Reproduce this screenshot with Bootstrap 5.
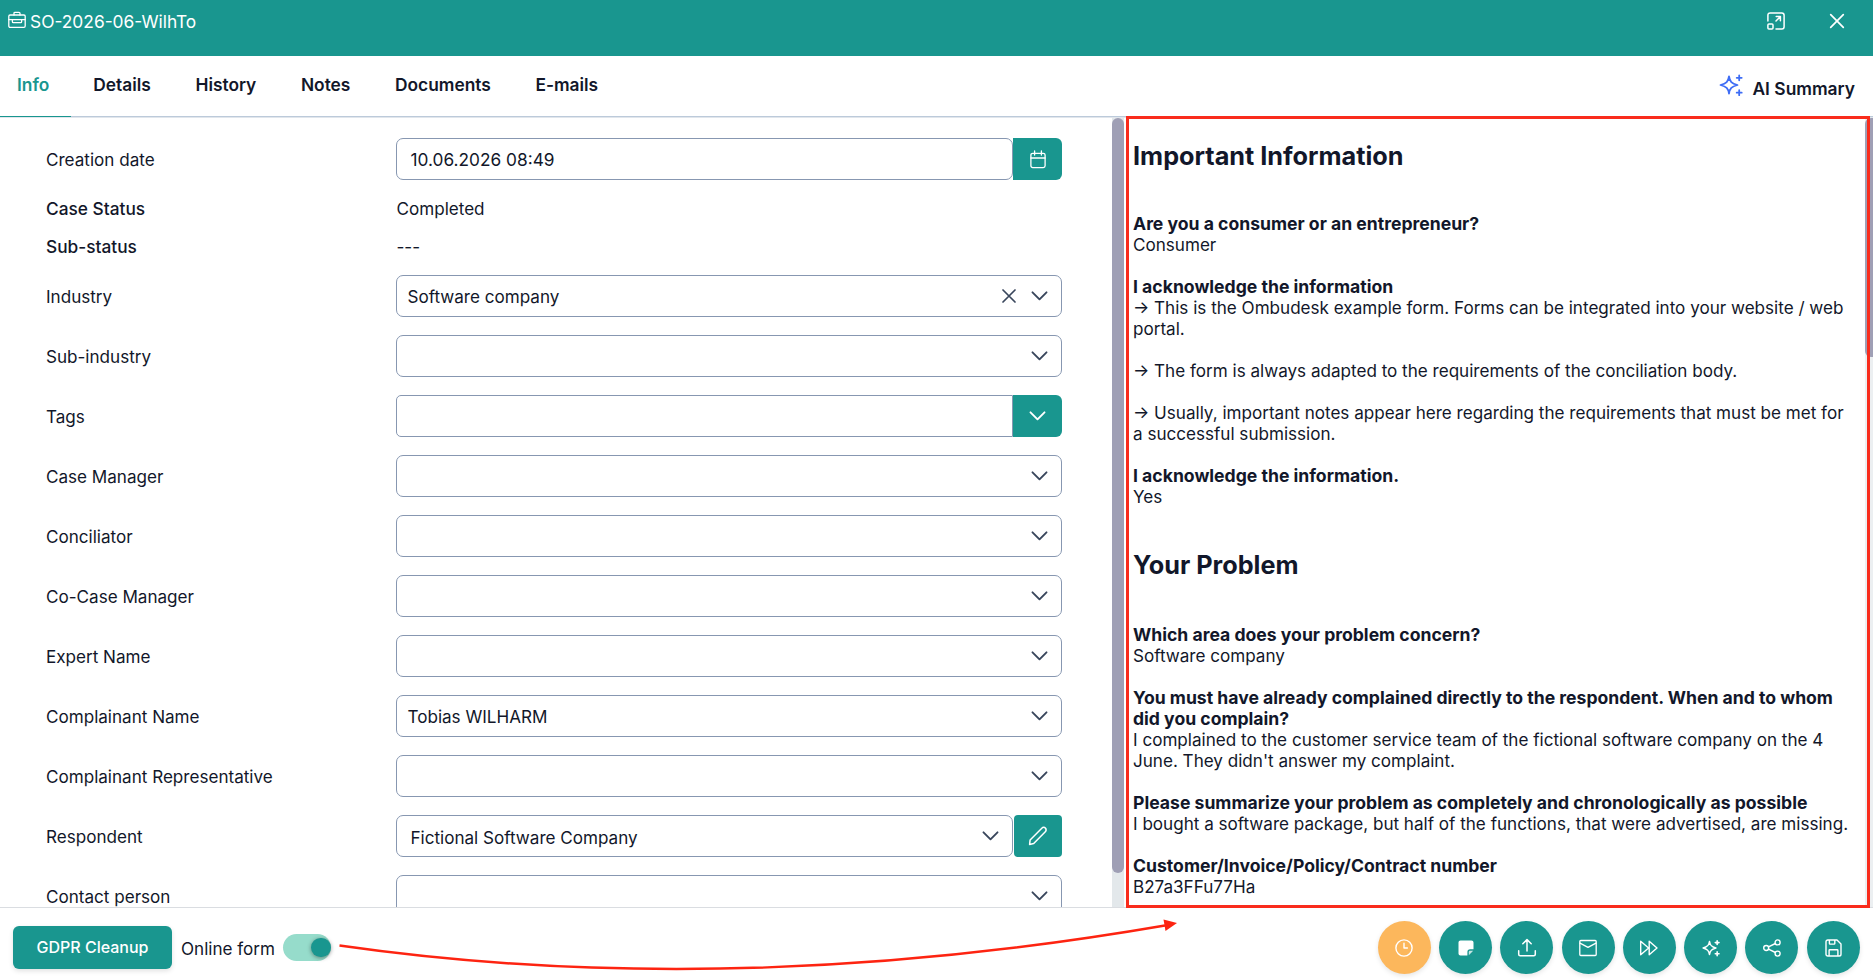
<!DOCTYPE html>
<html lang="en">
<head>
<meta charset="utf-8">
<title>SO-2026-06-WilhTo</title>
<link href="https://cdn.jsdelivr.net/npm/bootstrap@5.3.0/dist/css/bootstrap.min.css" rel="stylesheet">
<style>
:root{--teal:#19968f;--ink:#12172a;--line:#8797b1}
body{font-family:Inter,"Liberation Sans",sans-serif;font-size:17.08px;line-height:21px;color:var(--ink);height:980px;overflow:hidden;background:#fff}
svg{display:block;fill:none;stroke:currentColor;stroke-linecap:round;stroke-linejoin:round;flex:none}
.topbar{height:56px;background:var(--teal);padding:11px 0 0 8px}
.topbar .case-title{font-size:17.35px;line-height:22px;padding-left:4px}
.tabs{height:62px;border-bottom:1px solid #e1e6ec;box-shadow:inset 0 -1px 0 #bccada}
.tabs .nav-link{color:var(--ink);font-size:17.35px;font-weight:600;line-height:21px;padding:18px 22.3px 0;height:61px}
.tabs .nav-link.active{color:var(--teal);border-bottom:1px solid var(--teal);width:71px;padding-left:17px;padding-right:0}
.ai-link{font-size:17.4px;font-weight:600;padding:0 18px 0 0}
.workarea{height:790px;border-bottom:1px solid #dadde1}
.form-pane{width:1112px;padding:11px 50px 0 46px;overflow:hidden}
.frow{height:60px;flex:none;padding-top:9px}
.frow.first{height:61px}
.frow.plain{height:38px;padding-bottom:2px}
.frow.plain .flabel{padding-top:0}
.frow .flabel{width:350px;flex:none;padding-top:1px}
.frow.plain .flabel{font-weight:500;font-size:17.3px}
.frow.plain .fvalue{padding-left:.5px}
.field{height:42px;border:1px solid var(--line);border-radius:7px;padding:1px 13px 0 10.500px;flex:1}
.field.wide-pad{padding-left:13.500px}
.field svg{color:#39465c;margin-top:-1px}
.addon{width:49px;height:42px;background:var(--teal);color:#fff;border-radius:0 6px 6px 0}
.addon.alone{width:48px;border-radius:4px;margin-left:1px}
.vbar{width:12px;background:#e3e8eb;margin-right:2px}
.vbar div{height:755px;border-radius:6px;background:#9f9fb5}
.answers{flex:1;position:relative;overflow:hidden;padding:23px 0 0 7px}
.answers h2{font-size:25.25px;line-height:30px;font-weight:700;margin:0 0 43.5px}
.answers h2.first-head{margin-bottom:41.5px}
.answers p{margin:0 0 21px;white-space:nowrap}
.answers p+h2{margin-top:43.5px}
.answers b{font-weight:700;font-size:17.6px}
.rbar{position:absolute;right:-4px;top:0;width:12px;height:789px;background:#eceff1}
.rbar div{height:239px;border-radius:6px 0 0 6px;background:#9f9fb5}
.mark-box{position:absolute;left:1126px;top:116px;width:744px;height:792px;border:3px solid #f92c1c;z-index:3}
.mark-arrow{position:absolute;left:330px;top:910px;z-index:3;color:#fd2411}
.foot{height:72px;padding:0 13.5px 0 13px}
.gdpr{background:var(--teal);color:#fff;width:159px;height:43px;border-radius:6px;font-size:16px;font-weight:500;padding:0;border:0;margin-top:7px;box-shadow:0 2px 5px rgba(0,0,0,.12)}
.toggle{width:48px;height:27px;border-radius:14px;background:#96dccb;margin:7px 0 0 8px;padding:4px 0 0 28px}
.toggle div{width:20px;height:19px;border-radius:10px;background:var(--teal);box-shadow:0 1px 4px rgba(0,0,0,.4)}
.rbtn{width:53px;height:53px;border-radius:50%;background:var(--teal);color:#fff;box-shadow:0 2px 5px rgba(0,0,0,.1);border:0;padding:0;display:flex;align-items:center;justify-content:center}
.rbtn.wait{background:#fcb75c}
.round-actions{gap:8.25px;margin-top:7px}
</style>
</head>
<body>
<header class="topbar d-flex align-items-start text-white">
  <svg width="18" height="18" viewBox="0 0 18 18" stroke-width="1.3"><rect x=".8" y="4" width="16.4" height="12.4" rx="1.3"/><path d="M6 4V2.3c0-.6.4-1 1-1h4c.6 0 1 .4 1 1V4M.8 8.6h16.4M4.4 8.8v1.900c0 .6.3.9.9.9h7.400c.6 0 .9-.3.9-.9V8.800"/></svg>
  <span class="case-title">SO-2026-06-WilhTo</span>
  <svg class="ms-auto" width="18" height="18" viewBox="0 0 18 18" stroke-width="1.5" style="margin-top:1px"><path d="M.9 9V3.200C.9 1.700 1.700.9 3.200.9h11.600c1.500 0 2.300.8 2.300 2.300v11.600c0 1.500-.8 2.300-2.300 2.300H9M9 9l4.400-4.400M9.200 4.600h4.200v4.200"/><rect x=".9" y="12" width="5.100" height="5.100" rx="1"/></svg>
  <svg width="16" height="16" viewBox="0 0 16 16" stroke-width="1.7" style="margin:2px 28px 0 44px"><path d="M1.700 1.700l12.600 12.600M14.300 1.700L1.700 14.300"/></svg>
</header>
<nav class="tabs nav flex-nowrap">
  <a class="nav-link active">Info</a><a class="nav-link">Details</a><a class="nav-link">History</a><a class="nav-link">Notes</a><a class="nav-link">Documents</a><a class="nav-link">E-mails</a>
  <div class="ai-link ms-auto d-flex">
    <svg width="24" height="24" viewBox="0 0 24 24" stroke-width="1.8" style="color:#3e6df5;margin:17px 9px 0 0"><path d="M10 3.500c.8 5 2.500 7 8.500 8.500-6 1.500-7.700 3.500-8.500 8.500-.8-5-2.500-7-8.500-8.500 6-1.500 7.700-3.500 8.500-8.500z"/><path d="M20.200 2.300v5M17.700 4.800h5M20.200 17.200v5M17.700 19.700h5"/></svg>
    <span style="padding-top:22px">AI Summary</span>
  </div>
</nav>
<main class="workarea d-flex">
  <section class="form-pane d-flex flex-column" id="caseForm">
    <div class="frow first d-flex"><div class="flabel d-flex align-items-center" style="height:42px">Creation date</div><div class="field wide-pad d-flex align-items-center" style="font-size:17.3px">10.06.2026 08:49</div><div class="addon d-flex align-items-center justify-content-center"><svg width="16" height="19" viewBox="0 0 16 19" stroke-width="1.3"><rect x=".9" y="3.300" width="14.200" height="14.300" rx="1.800"/><path d="M.9 8h14.200M4.600 1v4M11.400 1v4"/></svg></div></div>
    <div class="frow plain d-flex align-items-center pt-0"><div class="flabel">Case Status</div><div class="fvalue">Completed</div></div>
    <div class="frow plain d-flex align-items-center pt-0"><div class="flabel">Sub-status</div><div class="fvalue">---</div></div>
  </section>
  <div class="vbar"><div></div></div>
  <section class="answers">
    <h2 class="first-head">Important Information</h2>
    <p><b>Are you a consumer or an entrepreneur?</b><br>Consumer</p>
    <p><b>I acknowledge the information</b><br>→ This is the Ombudesk example form. Forms can be integrated into your website / web<br>portal.</p>
    <p>→ The form is always adapted to the requirements of the conciliation body.</p>
    <p>→ Usually, important notes appear here regarding the requirements that must be met for<br>a successful submission.</p>
    <p class="mb-0"><b>I acknowledge the information.</b><br>Yes</p>
    <h2>Your Problem</h2>
    <p><b>Which area does your problem concern?</b><br>Software company</p>
    <p><b>You must have already complained directly to the respondent. When and to whom<br>did you complain?</b><br>I complained to the customer service team of the fictional software company on the 4<br>June. They didn't answer my complaint.</p>
    <p><b>Please summarize your problem as completely and chronologically as possible</b><br>I bought a software package, but half of the functions, that were advertised, are missing.</p>
    <p><b>Customer/Invoice/Policy/Contract number</b><br>B27a3FFu77Ha</p>
    <div class="rbar"><div></div></div>
  </section>
</main>
<footer class="foot d-flex align-items-center">
  <button class="gdpr">GDPR Cleanup</button>
  <span style="margin:8px 0 0 9px">Online form</span>
  <div class="toggle"><div></div></div>
  <div class="round-actions d-flex ms-auto">
    <button class="rbtn wait"><svg width="18" height="18" viewBox="0 0 18 18" stroke-width="1.400"><circle cx="9" cy="9" r="8.100"/><path d="M9 4.200V9h3.400"/></svg></button>
    <button class="rbtn"><svg width="16" height="16" viewBox="0 0 16 16"><path fill="#fff" stroke="none" d="M2.500.5h11c1.100 0 2 .9 2 2v6.800h-3.400c-1.700 0-2.700 1-2.700 2.700v3.500H2.500c-1.100 0-2-.9-2-2v-11c0-1.100.9-2 2-2z"/><path fill="#fff" stroke="none" opacity=".75" d="M10.800 15.200v-3c0-.9.500-1.400 1.400-1.400h3z"/></svg></button>
    <button class="rbtn"><svg width="20" height="20" viewBox="0 0 20 20" stroke-width="1.500"><path d="M10 13V1.900M5.800 5.800L10 1.600l4.200 4.200M1.700 12.800v3.400c0 .9.600 1.500 1.500 1.500h13.600c.9 0 1.500-.6 1.500-1.500v-3.400"/></svg></button>
    <button class="rbtn"><svg width="18" height="18" viewBox="0 0 18 18" stroke-width="1.300"><rect x=".8" y="1.500" width="16.400" height="15" rx="1"/><path d="M1 4.200l8 4.200 8-4.200"/></svg></button>
    <button class="rbtn"><svg width="20" height="18" viewBox="0 0 20 18" stroke-width="1.400"><path d="M1.700 2.200v13.600L9.600 9zM10.200 2.200v13.600L18 9z"/></svg></button>
    <button class="rbtn"><svg width="18" height="18" viewBox="0 0 24 24" stroke-width="2.100"><path d="M10 3.500c.8 5 2.500 7 8.500 8.500-6 1.500-7.700 3.500-8.500 8.500-.8-5-2.500-7-8.500-8.500 6-1.500 7.700-3.500 8.500-8.500z"/><path d="M20.200 2.300v5M17.700 4.800h5M20.200 17.200v5M17.700 19.700h5"/></svg></button>
    <button class="rbtn"><svg width="18" height="18" viewBox="0 0 18 18" stroke-width="1.400"><circle cx="3.200" cy="9" r="2.500"/><circle cx="14.600" cy="3.400" r="2.500"/><circle cx="14.600" cy="14.600" r="2.500"/><path d="M5.500 7.900l6.900-3.400M5.500 10.100l6.900 3.400"/></svg></button>
    <button class="rbtn"><svg width="17" height="18" viewBox="0 0 17 18" stroke-width="1.400"><path d="M2.800 1h9.200l4 4v10.200c0 1.100-.7 1.800-1.800 1.800H2.800C1.700 17 1 16.300 1 15.200V2.800C1 1.700 1.700 1 2.800 1zM4.400 1.200v3.300c0 .4.200.6.600.6h4.200c.4 0 .6-.2.6-.6V1.200M4.100 16.800v-5.300c0-.4.300-.7.7-.7h7.400c.4 0 .7.300.7.700v5.300"/></svg></button>
  </div>
</footer>
<div class="mark-box"></div>
<svg class="mark-arrow" width="860" height="70" viewBox="330 910 860 70"><path d="M339.500 945.500Q726 1001 1165 925.500" stroke-width="2.400" stroke-linecap="butt"/><path d="M1177 923L1163.500 919.500 1165.500 931z" fill="currentColor" stroke="none"/></svg>
<script src="https://cdn.jsdelivr.net/npm/bootstrap@5.3.0/dist/js/bootstrap.bundle.min.js"></script>
<script>
const chevron='<svg width="17" height="10" viewBox="0 0 17 10" stroke-width="1.9"><path d="M1.500 1.300l7 7 7-7"/></svg>';
const cross='<svg width="14" height="14" viewBox="0 0 14 14" stroke-width="1.7" style="margin-right:15.5px"><path d="M1 1l12 12M13 1L1 13"/></svg>';
const pencil='<svg width="20" height="20" viewBox="0 0 20 20" stroke-width="1.500"><path d="M1.600 18.400l.5-4.400L13.800 2.200c1.100-1.100 2.700-1.100 3.600-.1 1 1 1 2.500-.1 3.600L5.700 17.500z"/></svg>';
const rows=[['Industry','Software company','clear'],['Sub-industry',''],['Tags','','tags'],['Case Manager',''],['Conciliator',''],['Co-Case Manager',''],['Expert Name',''],['Complainant Name','Tobias WILHARM'],['Complainant Representative',''],['Respondent','Fictional Software Company','edit'],['Contact person','']];
const form=document.getElementById('caseForm');
for(const [label,value,kind] of rows){
  const tags=kind==='tags',edit=kind==='edit';
  form.insertAdjacentHTML('beforeend',`<div class="frow d-flex"><div class="flabel d-flex align-items-center" style="height:42px">${label}</div>
  <div class="field d-flex align-items-center ${edit?'wide-pad':''}" ${tags?'style="border-radius:5px 0 0 5px"':''}><span class="me-auto" ${edit?'style="padding-top:1px"':''}>${value}</span>${kind==='clear'?cross:''}${tags?'':chevron}</div>
  ${tags?`<div class="addon d-flex align-items-center justify-content-center">${chevron}</div>`:''}${edit?`<div class="addon alone d-flex align-items-center justify-content-center">${pencil}</div>`:''}</div>`);
}
</script>
</body>
</html>
